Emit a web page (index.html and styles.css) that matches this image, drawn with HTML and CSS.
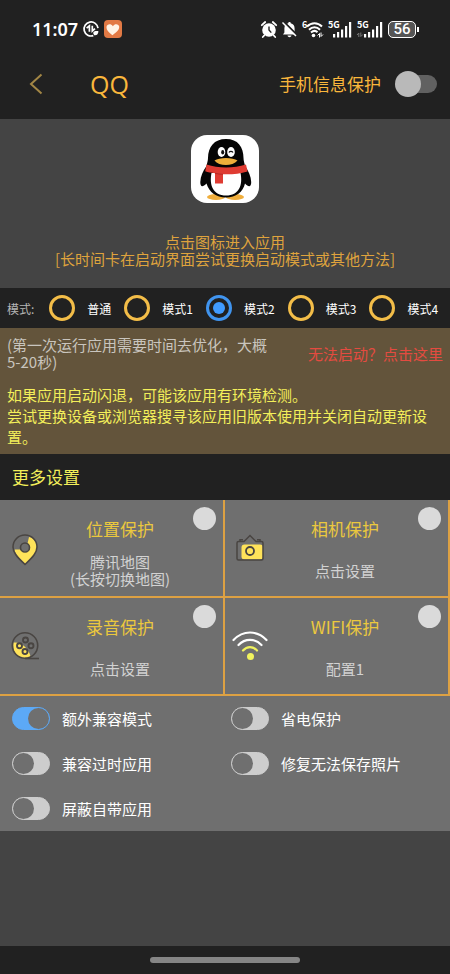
FILE: index.html
```
<!DOCTYPE html>
<html lang="zh-CN">
<head>
<meta charset="utf-8">
<meta name="viewport" content="width=device-width, initial-scale=1">
<title>QQ</title>
<link rel="stylesheet" href="styles.css">
</head>
<body>
<div class="status">
  <span class="time">11:07</span>
  <svg class="status-left" width="16" height="16" viewBox="0 0 16 16" fill="none" stroke="#fff" stroke-width="1.7">
    <path d="M15 7.2A7 7 0 1 0 10.3 14.6"/>
    <path d="M3.600 7.200 6.400 4.800V10.800M9.300 4.800V10L12 7.600" stroke-width="1.700"/>
    <path d="M10.200 12.200c0-2 2-2.400 5.200-2.200 0 3-1.500 4.600-4.200 4.200z" fill="#fff" stroke="none"/>
  </svg>
  <svg width="18" height="18" viewBox="0 0 18 18">
    <rect width="18" height="18" rx="4" fill="#e27a45"/>
    <path d="M8.500 15.200C5 12.500 2.300 10 2.500 7 2.800 4 7 3.200 8.800 6.200c2-3.200 6.200-2.400 6.400.6.200 3-2.700 5.600-6.700 8.400z" fill="#fff4e6"/>
  </svg>
  <div class="status-icons">
    <svg width="16" height="17" viewBox="0 0 16 17">
      <circle cx="8" cy="9" r="6.800" fill="#fff"/>
      <path d="M.8 4.200 4.200 1M15.200 4.200 11.800 1M3.200 14.500 1.800 16M12.800 14.500l1.400 1.500" stroke="#fff" stroke-width="1.800" stroke-linecap="round"/>
      <path d="M8 5.500V9l2.300 2.600" fill="none" stroke="#212121" stroke-width="1.400"/>
    </svg>
    <svg width="15" height="17" viewBox="0 0 15 17">
      <path d="M7.500 1c.9 0 1.200.6 1.200 1.200 2.600.6 3.900 2.600 3.900 5.200v4l1.400 2H1l1.400-2v-4c0-2.600 1.300-4.600 3.900-5.200C6.300 1.600 6.600 1 7.500 1zM5.500 14.500h4c-.5 2.200-3.500 2.200-4 0z" fill="#fff"/>
      <path d="M1.500.5 15 14" stroke="#212121" stroke-width="2"/>
      <path d="M.5 1.500 14 15" stroke="#fff" stroke-width="1.500"/>
    </svg>
    <svg width="21" height="17" viewBox="0 0 21 17" fill="none" stroke="#fff" stroke-width="2">
      <text x="0" y="7" class="svg-label">6</text>
      <path d="M5 5.500c4.500-4.400 10.500-4.400 15 0M7 8.800c3.300-3.300 7.700-3.300 11 0"/>
      <path d="M9 11.600c2.200-2 4.800-2 6.500-.4"/>
      <circle cx="11.500" cy="14.500" r="1.800" fill="#fff" stroke="none"/>
      <path d="M15.500 14.500l2-2v4M19 11.500v4l2-2" stroke-width="1"/>
    </svg>
    <svg width="24" height="17" viewBox="0 0 24 17" fill="#fff">
      <text x="0" y="7" class="svg-label">5G</text>
      <path d="M5 13h2.200v3.500H5zM9 11h2.200v5.500H9zM13 8.500h2.200v8H13zM17 5h2.200v11.500H17zM21 1h2.200v15.500H21z"/>
    </svg>
    <svg width="26" height="17" viewBox="0 0 26 17" fill="#fff">
      <text x="0" y="7" class="svg-label">5G</text>
      <path d="M7 13h2.200v3.500H7zM11 11h2.200v5.500H11zM15 8.500h2.200v8H15zM19 5h2.200v11.500H19zM23 1h2.200v15.500H23z"/>
      <path d="M0 14l1.800-2v4M3.800 11.500v4l2-2" fill="none" stroke="#777"/>
    </svg>
    <span class="battery"><span class="battery-case">56</span></span>
  </div>
</div>

<header class="topbar">
  <button class="back" aria-label="返回">
    <svg width="14" height="22" viewBox="0 0 14 22" fill="none" stroke="#a28645" stroke-width="2"><path d="M12.500 1.500 2 11l10.500 9.500"/></svg>
  </button>
  <h1>QQ</h1>
  <label class="device" for="device-guard">手机信息保护</label>
  <input class="md-switch" type="checkbox" id="device-guard">
</header>

<main>
  <section class="hero">
    <button class="app-icon" aria-label="QQ">
      <svg width="68" height="68" viewBox="0 0 68 68">
        <rect width="68" height="68" rx="16" fill="#fff"/>
        <ellipse cx="25" cy="62" rx="9" ry="3" fill="#f0ae3c"/>
        <ellipse cx="44" cy="62" rx="9" ry="3" fill="#f0ae3c"/>
        <path d="M35 4C23 4 17 12 17 23c0 3-1 5-1.500 8C12 36 9.500 41 9.300 47c-.1 5 2.200 5.500 6.200 1.500C18 57 25 62.500 35 62.500S52 57 54 48.500c3.800 4 6.300 3.500 6.200-1.500-.2-6-2.700-11-6.200-16-.5-3-1.500-5-1.500-8C52.500 12 47 4 35 4z" fill="#050505"/>
        <path d="M20.500 38h29c2.500 12-1.500 22.500-14.500 22.500S18 50 20.500 38z" fill="#fff"/>
        <ellipse cx="30.500" cy="17" rx="3.800" ry="5" fill="#fff"/>
        <ellipse cx="40" cy="17" rx="3.800" ry="5" fill="#fff"/>
        <ellipse cx="31.700" cy="17.300" rx="1.500" ry="2.200" fill="#111"/>
        <path d="M38 17.500c.8-1.500 3-1.500 4 0" fill="none" stroke="#111" stroke-width="1.300"/>
        <path d="M23.500 25.500C28 22 42 22 46.500 25.500c-5 6-18.500 6-23 0z" fill="#edae3a"/>
        <path d="M15.500 29.500c12 4 27 4 39.500 0l1.500 7C49 39 41 39.500 32 39.300V48.500h-8v-10.200c-4-.5-7-1-9.800-2z" fill="#df3b32"/>
        <path d="M24 38.300c3 .7 5.500 1 8 1" fill="none" stroke="#a92722" stroke-width=".8"/>
      </svg>
    </button>
    <p>点击图标进入应用<br>[长时间卡在启动界面尝试更换启动模式或其他方法]</p>
  </section>

  <div class="modes" role="radiogroup" aria-label="模式">
    <span class="modes-title">模式:</span>
    <label class="mode"><input type="radio" name="mode">普通</label>
    <label class="mode"><input type="radio" name="mode">模式1</label>
    <label class="mode"><input type="radio" name="mode" checked>模式2</label>
    <label class="mode"><input type="radio" name="mode">模式3</label>
    <label class="mode"><input type="radio" name="mode">模式4</label>
  </div>

  <section class="notice">
    <div class="notice-top">
      <p>(第一次运行应用需要时间去优化，大概5-20秒)</p>
      <a href="#help">无法启动？点击这里</a>
    </div>
    <p class="warning">如果应用启动闪退，可能该应用有环境检测。<br>尝试更换设备或浏览器搜寻该应用旧版本使用并关闭自动更新设置。</p>
  </section>

  <h2>更多设置</h2>

  <section class="tiles">
    <div class="tile">
      <button class="tile-main">
        <svg width="36" height="36" viewBox="0 0 36 36" fill="none" stroke="#494542" stroke-width="1.600">
          <path d="M7.500 19.500H14a4.500 4.500 0 1 0 6.500-6L22 7c4.500 1 8 5 8 10 0 5.500-5 10.500-11.500 17C12 28 8 24 7.500 19.500z" fill="#ffe35a" stroke="none"/>
          <path d="M18 34.500C10 27 6 22.500 6 17a12 12 0 0 1 24 0c0 5.500-4 10-12 17.500z"/>
          <circle cx="18" cy="17.500" r="4.500"/>
        </svg>
        <span class="tile-text"><span class="tile-title">位置保护</span><span class="tile-sub"><span>腾讯地图<br>(长按切换地图)</span></span></span>
      </button>
      <input class="dot" type="checkbox" aria-label="位置保护">
    </div>
    <div class="tile">
      <button class="tile-main">
        <svg width="36" height="36" viewBox="0 0 36 36" fill="none" stroke="#494542" stroke-width="1.500">
          <rect x="9.500" y="14.500" width="21.500" height="15" rx="3" fill="#ffe35a" stroke="none"/>
          <path d="M14 30H6.500q-1.500 0-1.500-1.500V13q0-1.500 1.500-1.500h5.500l6-6 6 6h5.500q1.500 0 1.500 1.500v15.500q0 1.500-1.500 1.500H10"/>
          <path d="M8 11.500v-1.800h3M25 9.700h3v1.800"/>
          <circle cx="18" cy="21" r="4" stroke-width="1.800"/>
        </svg>
        <span class="tile-text"><span class="tile-title">相机保护</span><span class="tile-sub"><span>点击设置</span></span></span>
      </button>
      <input class="dot" type="checkbox" aria-label="相机保护">
    </div>
    <div class="tile">
      <button class="tile-main">
        <svg width="36" height="36" viewBox="0 0 36 36" fill="none" stroke="#494542" stroke-width="1.600">
          <path d="M6.500 14.500c7-1 15 5 17 14-2 2-6 2.500-9 1.500-6-2-9-8-8-15.500z" fill="#ffe35a" stroke="none"/>
          <circle cx="18" cy="17.500" r="12.700"/>
          <path d="M18 30.500h14"/>
          <g stroke-width="1.900"><circle cx="18.500" cy="12" r="2.500"/><circle cx="24" cy="17.800" r="2.500"/><circle cx="12.500" cy="17.800" r="2.500"/><circle cx="18" cy="23.500" r="2.500"/></g>
        </svg>
        <span class="tile-text"><span class="tile-title">录音保护</span><span class="tile-sub"><span>点击设置</span></span></span>
      </button>
      <input class="dot" type="checkbox" aria-label="录音保护">
    </div>
    <div class="tile">
      <button class="tile-main">
        <svg width="36" height="36" viewBox="0 0 36 36" fill="none" stroke="#fff" stroke-width="2.200" stroke-linecap="round">
          <path d="M1.500 12C11 2 25 2 34.500 12M6.500 17c6.500-6.800 16.500-6.800 23 0"/>
          <path d="M11 22.500c4-4.600 10-4.600 14 0" stroke="#f1f35e"/>
          <circle cx="18.500" cy="28.500" r="3.500" fill="#f1f35e" stroke="none"/>
        </svg>
        <span class="tile-text"><span class="tile-title">WIFI保护</span><span class="tile-sub"><span>配置1</span></span></span>
      </button>
      <input class="dot" type="checkbox" aria-label="WIFI保护">
    </div>
  </section>

  <section class="options">
    <label class="option"><input type="checkbox" checked>额外兼容模式</label>
    <label class="option"><input type="checkbox">省电保护</label>
    <label class="option"><input type="checkbox">兼容过时应用</label>
    <label class="option"><input type="checkbox">修复无法保存照片</label>
    <label class="option"><input type="checkbox">屏蔽自带应用</label>
  </section>
</main>

<footer class="navbar"><span class="pill"></span></footer>
</body>
</html>
```
FILE: styles.css
```
* { box-sizing: border-box; }

body {
  margin: 0;
  min-height: 100vh;
  display: flex;
  flex-direction: column;
  background: #444;
  color: #fff;
  font: 15px/17px "Noto Sans CJK SC", sans-serif;
}

h1, h2, p { margin: 0; font-weight: 400; }
button { padding: 0; border: 0; background: none; color: inherit; font: inherit; cursor: pointer; }
input { appearance: none; margin: 0; flex: none; }
svg { display: block; flex: none; overflow: visible; }

.status {
  display: flex;
  align-items: center;
  height: 58px;
  padding: 0 31px 0 32px;
  background: #212121;
}
.time { font: 600 18px/20px "Noto Sans", sans-serif; }
.status-left { margin: 0 5px; }
.status-icons { display: flex; align-items: center; gap: 5px; margin-left: auto; }
.svg-label { font: 700 9px "Noto Sans CJK SC", sans-serif; fill: #fff; stroke: none; }
.battery { display: flex; align-items: center; width: 31px; }
.battery::after { content: ""; width: 2px; height: 5px; margin-left: 1px; background: #fff; }
.battery-case {
  width: 28px;
  border: 1px solid #fff;
  border-radius: 5px;
  background: #555;
  font: 500 15px/15px Roboto, sans-serif;
  text-align: center;
}

.topbar {
  display: flex;
  align-items: center;
  height: 61px;
  padding: 0 13px 9px 29px;
  background: #212121;
  color: #fab73c;
}
.back { width: 61px; }
h1 { font: 500 25px/36px "Open Sans", sans-serif; }
.device { margin-left: auto; font-size: 17px; line-height: 24px; }
.md-switch {
  display: flex;
  align-items: center;
  width: 34px;
  height: 18px;
  margin-left: 22px;
  background: #616161;
  border-radius: 9px;
}
.md-switch::before {
  content: "";
  flex: none;
  width: 26px;
  height: 26px;
  margin-left: -8px;
  border-radius: 50%;
  background: #b9b9b9;
}
.md-switch:checked { justify-content: flex-end; }

main { flex: 1; }

.hero {
  display: flex;
  flex-direction: column;
  align-items: center;
  gap: 30px;
  padding: 16px 0 21px;
  color: #dfa33d;
  text-align: center;
}

.modes {
  display: flex;
  align-items: center;
  gap: 13px;
  height: 40px;
  padding: 0 7px;
  background: #212121;
  font-size: 12px;
  white-space: nowrap;
}
.modes-title { padding-right: 2px; color: #b5b5b5; }
.mode { display: flex; align-items: center; gap: 12px; }
.mode input { width: 26px; height: 26px; padding: 4px; border: 3px solid #f3bd48; border-radius: 50%; }
.mode input:checked { border-color: #4094ee; background: #409bff content-box; }

.notice { padding: 8px 7px 7px; background: #63543b; }
.notice-top { display: flex; align-items: center; gap: 36px; margin-bottom: 14px; color: #c9c5be; }
.notice-top p { flex: 1; }
.notice a { flex: none; color: #e44b40; text-decoration: none; }
.warning { padding-right: 8px; color: #f3ef5a; line-height: 21px; }

h2 { padding: 11px 12px; background: #212121; color: #f3ef5a; font-size: 17px; line-height: 24px; }

.tiles { display: grid; grid-template-columns: 1fr 1fr; }
.tile {
  position: relative;
  border: solid #dda143;
  border-width: 0 2px 2px 0;
  background: #6f6f6f;
}
.tile-main {
  display: grid;
  grid-template-columns: 36px 1fr;
  align-items: center;
  gap: 7px;
  width: 100%;
  min-height: 96px;
  padding: 0 33px 0 7px;
}
.tile-text { display: flex; flex-direction: column; gap: 12px; padding: 17px 0 9px; }
.tile-title { color: #ebc83e; font-size: 17px; line-height: 24px; }
.tile-sub {
  display: flex;
  align-items: center;
  justify-content: center;
  min-height: 34px;
  color: #d2d2d2;
}
.dot { position: absolute; top: 7px; right: 7px; width: 23px; height: 23px; border-radius: 50%; background: #dadada; }
.dot:checked { background: #409bff; }

.options {
  display: grid;
  grid-template-columns: 1fr 1fr;
  padding-left: 12px;
  background: #6f6f6f;
}
.option { display: flex; align-items: center; gap: 12px; height: 45px; }
.option input {
  display: flex;
  width: 38px;
  height: 23px;
  border: 1px solid #cdcdcd;
  border-radius: 12px;
  background: #cdcdcd;
}
.option input::before { content: ""; width: 21px; height: 21px; border-radius: 50%; background: #6f6f6f; }
.option input:checked { justify-content: flex-end; border-color: #5ca9f6; background: #5ca9f6; }

.navbar { display: flex; align-items: center; justify-content: center; height: 28px; background: #212121; }
.pill { width: 33.333%; height: 6px; border-radius: 3px; background: #858585; }
```
